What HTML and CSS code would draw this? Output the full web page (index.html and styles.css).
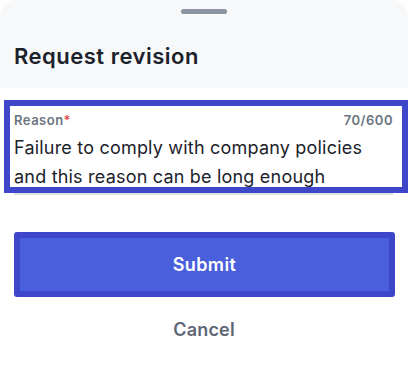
FILE: index.html
```html
<!DOCTYPE html>
<html lang="en">
<head>
<meta charset="utf-8">
<title>Request revision</title>
<link rel="stylesheet" href="styles.css">
</head>
<body>
<div class="sheet">
  <header class="sheet-header">
    <div class="handle"></div>
    <h1 class="title">Request revision</h1>
  </header>
  <div class="sheet-body">
    <div class="field">
      <div class="field-box">
        <div class="field-label-row">
          <span class="field-label">Reason<span class="required">*</span></span>
          <span class="field-count">70/600</span>
        </div>
        <div class="field-value">Failure to comply with company policies and this reason can be long enough</div>
      </div>
      <div class="field-line"></div>
    </div>
    <div class="actions">
      <button class="btn-primary" type="button">Submit</button>
      <button class="btn-text" type="button">Cancel</button>
    </div>
  </div>
</div>
</body>
</html>
```

FILE: styles.css
```css
* { box-sizing: border-box; }
html, body { margin: 0; padding: 0; background: #ffffff; }
body {
  font-family: Inter, "Noto Sans", "Liberation Sans", sans-serif;
  width: 408px;
  height: 371px;
  overflow: hidden;
}
.sheet { background: #ffffff; }
.sheet-header {
  background: #f7f8fa;
  border-radius: 16px 16px 0 0;
  height: 88px;
  padding-top: 9px;
  display: flex;
  flex-direction: column;
}
.handle {
  width: 46px;
  height: 5px;
  border-radius: 3px;
  background: #8b94a3;
  align-self: center;
}
.title {
  margin: 28px 0 0 14px;
  font-size: 22px;
  line-height: 28px;
  font-weight: 600;
  letter-spacing: 0.5px;
  color: #1c222b;
}
.sheet-body { padding: 12px 14px 0; }
.field-box {
  margin: 0 -14px 0 -10px;
  border: 6px solid #3e46c9;
  padding: 6px 9px 0 4px;
  height: 93px;
  background: #fff;
}
.field-label-row {
  display: flex;
  justify-content: space-between;
  align-items: baseline;
  font-size: 13px;
  line-height: 16px;
  font-weight: 600;
  letter-spacing: 0.5px;
  color: #6b7380;
}
.required { color: #e5484d; }
.field-value {
  font-size: 18px;
  line-height: 29px;
  letter-spacing: 0.2px;
  color: #1c222b;
  margin-top: 5px;
}
.field-line {
  height: 2px;
  background: #dde1e6;
  margin-right: 1px;
}
.actions {
  display: flex;
  flex-direction: column;
  margin-top: 37px;
}
.btn-primary {
  height: 65px;
  border: 6px solid #3e46c9;
  border-radius: 3px;
  background: #4a5fdc;
  color: #ffffff;
  font-family: inherit;
  font-size: 18px;
  font-weight: 600;
  letter-spacing: 0.4px;
  margin-right: -1px;
  cursor: pointer;
}
.btn-text {
  margin-top: 16px;
  height: 32px;
  border: 0;
  background: transparent;
  color: #5e6675;
  font-family: inherit;
  font-size: 18px;
  font-weight: 600;
  letter-spacing: 0.2px;
  cursor: pointer;
}
```
